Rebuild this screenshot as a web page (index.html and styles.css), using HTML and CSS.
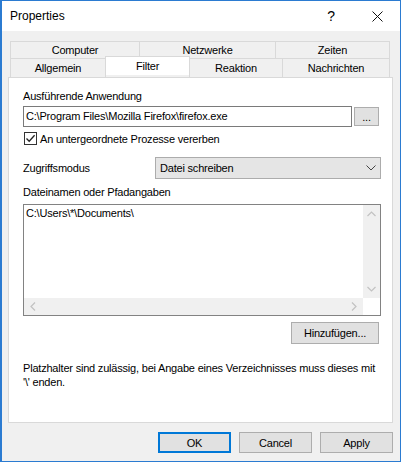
FILE: index.html
```html
<!DOCTYPE html>
<html lang="de">
<head>
    <meta charset="UTF-8">
    <title>Properties</title>
    <link rel="stylesheet" href="styles.css">
</head>
<body>
    <div class="window">
        <div class="titlebar">
            <span class="title">Properties</span>
            <span class="caption-btn help">?</span>
            <span class="caption-btn close">
                <svg width="11" height="11" viewBox="0 0 11 11"><path d="M0.5 0.5 L10.5 10.5 M10.5 0.5 L0.5 10.5" stroke="#111" stroke-width="1" fill="none"/></svg>
            </span>
        </div>

        <div class="client">
            <div class="tabs">
                <div class="tab-row">
                    <div class="tab w-computer">Computer</div>
                    <div class="tab w-netz">Netzwerke</div>
                    <div class="tab w-zeiten">Zeiten</div>
                </div>
                <div class="tab-row">
                    <div class="tab w-allg">Allgemein</div>
                    <div class="tab w-filter selected">Filter</div>
                    <div class="tab w-reakt">Reaktion</div>
                    <div class="tab w-nach">Nachrichten</div>
                </div>
            </div>

            <div class="panel">
                <label class="label first">Ausführende Anwendung</label>
                <div class="path-row">
                    <div class="textbox">C:\Program Files\Mozilla Firefox\firefox.exe</div>
                    <button class="btn browse">...</button>
                </div>

                <div class="check-row">
                    <span class="checkbox">
                        <svg width="11" height="11" viewBox="0 0 11 11"><path d="M1.5 5.5 L4.2 8.3 L9.6 2.3" stroke="#222" stroke-width="1.3" fill="none"/></svg>
                    </span>
                    <span>An untergeordnete Prozesse vererben</span>
                </div>

                <div class="mode-row">
                    <span class="mode-label">Zugriffsmodus</span>
                    <div class="combo">
                        <span>Datei schreiben</span>
                        <svg width="10" height="6" viewBox="0 0 10 6"><path d="M0.5 0.5 L5 5 L9.5 0.5" stroke="#444" stroke-width="1" fill="none"/></svg>
                    </div>
                </div>

                <label class="label">Dateinamen oder Pfadangaben</label>
                <div class="listbox">
                    <div class="list-items">C:\Users\*\Documents\</div>
                    <div class="vscroll">
                        <svg width="9" height="6" viewBox="0 0 9 6"><path d="M0.5 5 L4.5 1 L8.5 5" stroke="#c2c2c2" stroke-width="1.2" fill="none"/></svg>
                        <svg width="9" height="6" viewBox="0 0 9 6"><path d="M0.5 1 L4.5 5 L8.5 1" stroke="#c2c2c2" stroke-width="1.2" fill="none"/></svg>
                    </div>
                    <div class="hscroll">
                        <svg width="6" height="9" viewBox="0 0 6 9"><path d="M5 0.5 L1 4.5 L5 8.5" stroke="#c2c2c2" stroke-width="1.2" fill="none"/></svg>
                        <svg width="6" height="9" viewBox="0 0 6 9"><path d="M1 0.5 L5 4.5 L1 8.5" stroke="#c2c2c2" stroke-width="1.2" fill="none"/></svg>
                    </div>
                    <div class="corner"></div>
                </div>

                <div class="add-row">
                    <button class="btn add">Hinzufügen...</button>
                </div>

                <p class="note">Platzhalter sind zulässig, bei Angabe eines Verzeichnisses muss dieses mit '\' enden.</p>
            </div>

            <div class="dialog-buttons">
                <button class="btn default">OK</button>
                <button class="btn">Cancel</button>
                <button class="btn">Apply</button>
            </div>
        </div>
    </div>
</body>
</html>
```

FILE: styles.css
```css
body {
    margin: 0;
    font-family: 'Liberation Sans', Arial, sans-serif;
    font-size: 11px;
    letter-spacing: -0.2px;
    color: #000;
    background-color: #fff;
}

.window {
    width: 401px;
    height: 462px;
    box-sizing: border-box;
    border: 1px solid #2b7bd1;
    border-left-width: 2px;
    background-color: #f0f0f0;
    display: flex;
    flex-direction: column;
}

.titlebar {
    height: 30px;
    background-color: #fff;
    display: flex;
    align-items: center;
}

.title {
    flex: 1;
    padding-left: 8px;
    font-size: 12px;
    letter-spacing: 0;
}

.caption-btn {
    width: 46px;
    height: 30px;
    display: flex;
    align-items: center;
    justify-content: center;
}

.help {
    font-size: 14px;
}

.client {
    flex: 1;
    padding: 10px 7px 0 6px;
    display: flex;
    flex-direction: column;
}

.tabs {
    padding: 0 2px;
}

.tab-row {
    display: flex;
}

.tab {
    box-sizing: border-box;
    height: 17px;
    border: 1px solid #d9d9d9;
    border-bottom: none;
    margin-left: -1px;
    background-color: #f0f0f0;
    display: flex;
    align-items: center;
    justify-content: center;
}

.tab:first-child {
    margin-left: 0;
}

.tab-row + .tab-row .tab {
    height: 19px;
}

.tab.selected {
    height: 22px;
    margin-top: -2px;
    margin-bottom: -1px;
    background-color: #fff;
    position: relative;
    z-index: 1;
    align-items: flex-start;
    padding-top: 3px;
}

.w-computer { width: 130px; }
.w-netz { width: 137px; }
.w-zeiten { width: 115px; }
.w-allg { width: 96px; }
.w-filter { width: 85px; }
.w-reakt { width: 94px; }
.w-nach { width: 108px; }

.panel {
    height: 346px;
    box-sizing: border-box;
    background-color: #fff;
    border: 1px solid #d9d9d9;
    padding: 0 11px 0 14px;
    display: flex;
    flex-direction: column;
}

.label {
    display: block;
    margin-top: 7px;
    line-height: 13px;
}

.label.first {
    margin-top: 12px;
}

.path-row {
    display: flex;
    align-items: center;
    gap: 2px;
    margin-top: 3px;
    padding-right: 2px;
}

.textbox {
    flex: 1;
    height: 21px;
    box-sizing: border-box;
    border: 1px solid #7a7a7a;
    padding: 0 2px;
    line-height: 19px;
}

.btn {
    font-family: inherit;
    font-size: 11px;
    letter-spacing: -0.2px;
    color: #000;
    background-color: #e1e1e1;
    border: 1px solid #adadad;
    padding: 0;
    height: 21px;
    box-sizing: border-box;
}

.browse {
    width: 25px;
    height: 19px;
}

.check-row {
    display: flex;
    align-items: center;
    gap: 3px;
    margin-top: 5px;
    margin-left: 1px;
}

.checkbox {
    width: 13px;
    height: 13px;
    box-sizing: border-box;
    border: 1px solid #333;
    display: flex;
    align-items: center;
    justify-content: center;
}

.mode-row {
    display: flex;
    align-items: center;
    margin-top: 12px;
}

.mode-label {
    width: 132px;
}

.combo {
    flex: 1;
    height: 22px;
    box-sizing: border-box;
    background-color: #e5e5e5;
    border: 1px solid #acacac;
    display: flex;
    align-items: center;
    justify-content: space-between;
    padding: 0 4px 0 4px;
}

.listbox {
    margin-top: 5px;
    height: 112px;
    box-sizing: border-box;
    border: 1px solid #828282;
    display: grid;
    grid-template-columns: 1fr 17px;
    grid-template-rows: 1fr 17px;
}

.list-items {
    padding: 2px 2px;
    line-height: 13px;
}

.vscroll {
    background-color: #f0f0f0;
    display: flex;
    flex-direction: column;
    justify-content: space-between;
    align-items: center;
    padding: 6px 0;
}

.hscroll {
    background-color: #f0f0f0;
    display: flex;
    justify-content: space-between;
    align-items: center;
    padding: 0 6px;
}

.corner {
    background-color: #fff;
}

.add-row {
    display: flex;
    justify-content: flex-end;
    margin-top: 6px;
    padding-right: 2px;
}

.add {
    width: 88px;
    height: 22px;
}

.note {
    margin: 17px 0 0;
    line-height: 14px;
}

.dialog-buttons {
    display: flex;
    justify-content: flex-end;
    gap: 8px;
    margin-top: 9px;
}

.dialog-buttons .btn {
    width: 73px;
    height: 21px;
}

.dialog-buttons .default {
    border: 2px solid #0078d7;
}
```
